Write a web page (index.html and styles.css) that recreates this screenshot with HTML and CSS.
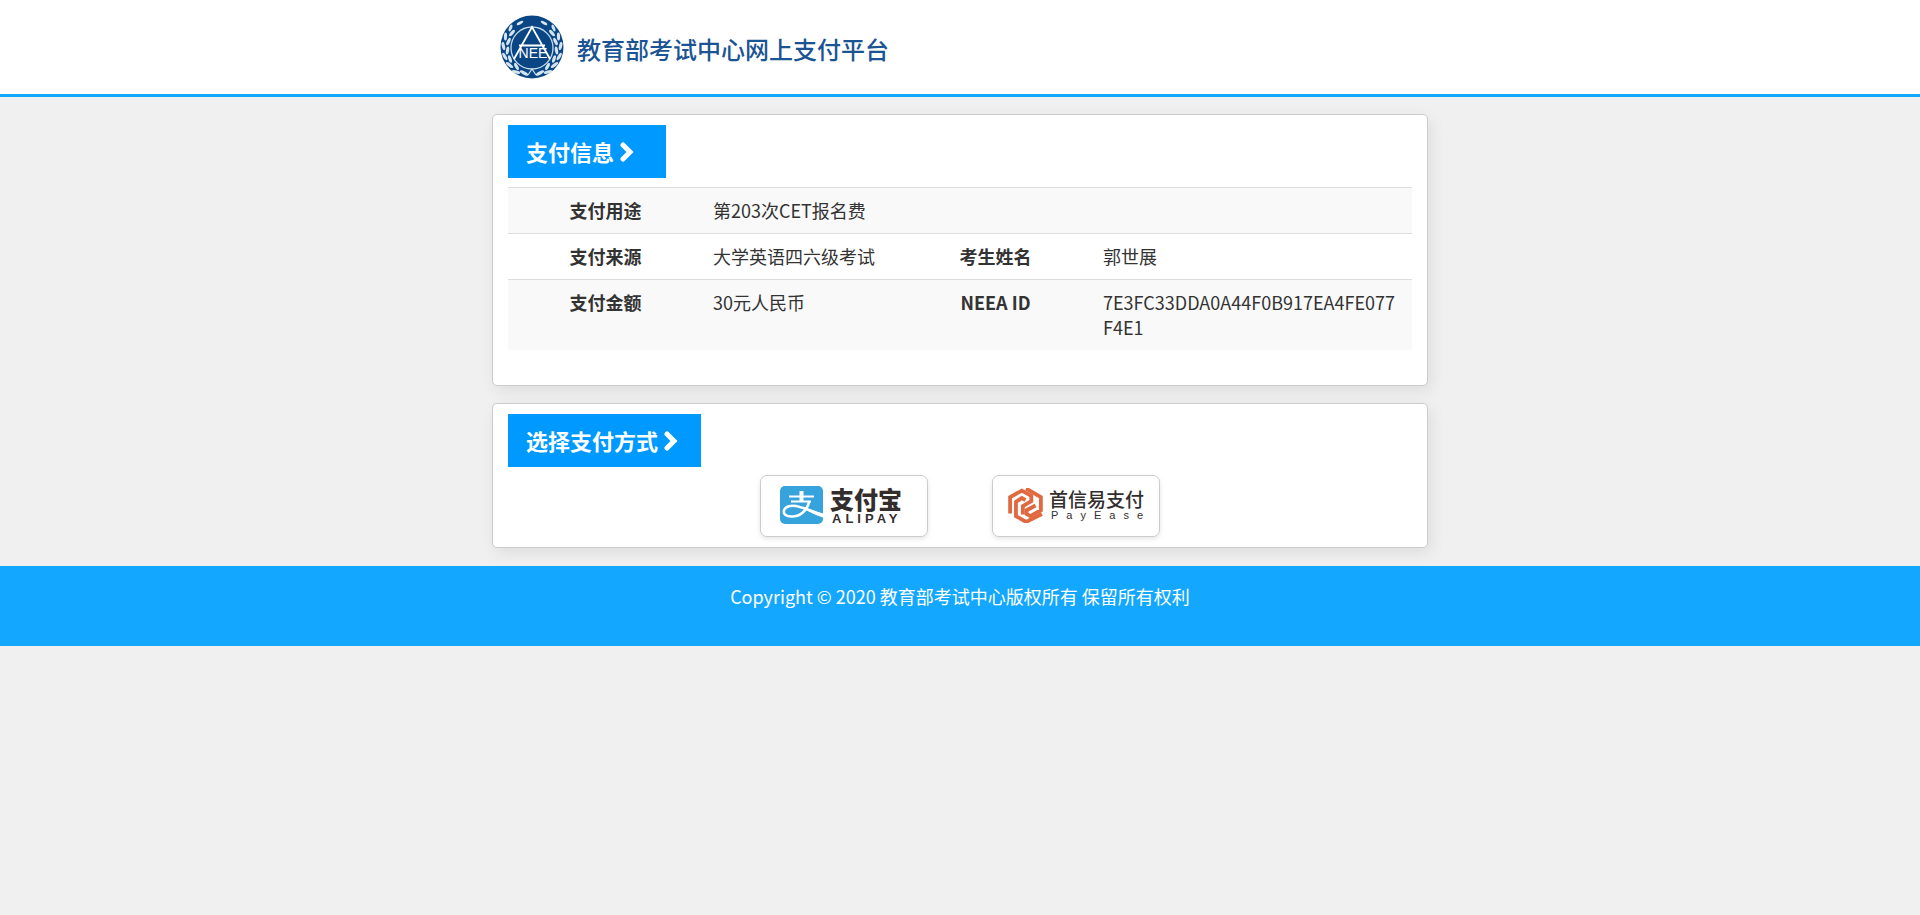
FILE: index.html
```html
<!DOCTYPE html>
<html lang="zh-CN">
<head>
<meta charset="utf-8">
<meta name="viewport" content="width=device-width, initial-scale=1">
<title>教育部考试中心网上支付平台</title>
<link rel="stylesheet" href="styles.css">
</head>
<body>
<header class="site-header">
  <div class="container brand">
    <svg class="emblem" viewBox="0 0 64 64" aria-hidden="true">
      <defs>
        <g id="branch" fill="#d5e4f1">
          <ellipse cx="24" cy="58" rx="4.6" ry="1.6" transform="rotate(28 24 58)"/>
          <ellipse cx="16" cy="57" rx="4.4" ry="1.6" transform="rotate(12 16 57)"/>
          <ellipse cx="16.500" cy="51.500" rx="1.600" ry="4" transform="rotate(-28 16.500 51.500)"/>
          <ellipse cx="9.500" cy="50" rx="4.400" ry="1.600" transform="rotate(38 9.500 50)"/>
          <ellipse cx="10" cy="44" rx="1.600" ry="4" transform="rotate(-18 10 44)"/>
          <ellipse cx="4.800" cy="41.500" rx="4.200" ry="1.600" transform="rotate(60 4.800 41.500)"/>
          <ellipse cx="7.500" cy="35.500" rx="1.600" ry="4" transform="rotate(10 7.500 35.500)"/>
          <ellipse cx="3.400" cy="31" rx="1.600" ry="4.200" transform="rotate(-12 3.400 31)"/>
          <ellipse cx="8.500" cy="26.500" rx="1.600" ry="4" transform="rotate(26 8.500 26.500)"/>
          <ellipse cx="5.500" cy="21.500" rx="1.600" ry="4" transform="rotate(2 5.500 21.500)"/>
          <ellipse cx="12" cy="18" rx="1.600" ry="4" transform="rotate(40 12 18)"/>
          <ellipse cx="10.500" cy="13" rx="1.500" ry="3.600" transform="rotate(22 10.500 13)"/>
          <ellipse cx="20" cy="8" rx="3.600" ry="1.400" transform="rotate(-28 20 8)"/>
        </g>
      </defs>
      <circle cx="32" cy="32" r="31.500" fill="#0a4684"/>
      <use href="#branch"/>
      <use href="#branch" transform="translate(64 0) scale(-1 1)"/>
      <circle cx="32" cy="33" r="21" fill="#0a4684" stroke="#c5d9ea" stroke-width="1.300"/>
      <path d="M14 44 L32 12 L50 44 M19 30.500 H45" fill="none" stroke="#fff" stroke-width="1.800"/>
      <path d="M28 60 L32 54 L36 60" fill="none" stroke="#d5e4f1" stroke-width="1.200"/>
      <text class="emblem-text" x="33" y="43" text-anchor="middle">NEE</text>
    </svg>
    <h1 class="brand-name">教育部考试中心网上支付平台</h1>
  </div>
</header>

<main class="container content">
  <section class="card card-info">
    <h2 class="tag">支付信息
      <svg class="chevron" viewBox="0 0 14 20" aria-hidden="true"><path d="M3 3 L10 10 L3 17"/></svg>
    </h2>
    <table class="info">
      <colgroup><col class="col-narrow"><col class="col-narrow"><col class="col-narrow"><col></colgroup>
      <tbody>
        <tr><th scope="row">支付用途</th><td colspan="3">第203次CET报名费</td></tr>
        <tr><th scope="row">支付来源</th><td>大学英语四六级考试</td><th scope="row">考生姓名</th><td>郭世展</td></tr>
        <tr><th scope="row">支付金额</th><td>30元人民币</td><th scope="row">NEEA ID</th><td>7E3FC33DDA0A44F0B917EA4FE077F4E1</td></tr>
      </tbody>
    </table>
  </section>

  <section class="card">
    <h2 class="tag">选择支付方式
      <svg class="chevron" viewBox="0 0 14 20" aria-hidden="true"><path d="M3 3 L10 10 L3 17"/></svg>
    </h2>
    <div class="methods">
      <button class="method" type="button">
        <svg class="alipay-icon" viewBox="0 0 43 38" aria-hidden="true">
          <rect width="43" height="38" rx="5" fill="#36a3dd"/>
          <path d="M9 10.500 H34 M11 15.500 H31" fill="none" stroke="#fff" stroke-width="2"/>
          <path d="M21.500 5 V16" fill="none" stroke="#fff" stroke-width="4"/>
          <path d="M29.500 15 C28 21 23 30 13 30.500 C6 31 3 28 4 24.500 C5 21 10 19 16 20 C24 21.500 33 26 43 29" fill="none" stroke="#fff" stroke-width="2.600"/>
          <path d="M24 21 C30 23.500 36 26 43 27.500 V31.500 C36 29.500 30 26 24 23 Z" fill="#fff"/>
        </svg>
        <span class="wordmark"><span class="alipay-cn">支付宝</span><span class="alipay-en">ALIPAY</span></span>
      </button>
      <button class="method" type="button">
        <svg class="payease-icon" viewBox="1 1 33 33" aria-hidden="true">
          <g fill="none" stroke="#e0693f" stroke-width="3.600">
            <path d="M3 25 V9.500 L14 3.500 L23 8.500 V13.500 L15 18 V26"/>
            <path d="M18 1.500 L32 9.500 V22 L22 27.500 L18.500 25.500 V22 L27 17.500"/>
            <path d="M33 25.500 L18 33 L8.500 27.500 V14 L14 10.500 L17.500 12.500"/>
          </g>
        </svg>
        <span class="wordmark"><span class="payease-cn">首信易支付</span><span class="payease-en">PayEase</span></span>
      </button>
    </div>
  </section>
</main>

<footer class="site-footer">Copyright © 2020 教育部考试中心版权所有 保留所有权利</footer>
</body>
</html>
```

FILE: styles.css
```css
* {
  box-sizing: border-box;
}

body {
  margin: 0;
  background: #f0f0f0;
  color: #333;
  font: 18px/25px "Noto Sans CJK SC", sans-serif;
}

.container {
  max-width: 936px;
  margin: 0 auto;
}

.site-header {
  background: #fff;
  border-bottom: 3px solid #13a7ff;
}

.brand {
  display: flex;
  align-items: center;
  gap: 13px;
  padding: 15px 8px;
}

.emblem {
  width: 64px;
  height: 64px;
}

.emblem-text {
  fill: #fff;
  font: 14px "Liberation Sans", sans-serif;
}

.brand-name {
  margin: 0;
  padding-top: 4px;
  color: #1b5493;
  font-size: 24px;
  font-weight: 500;
  line-height: 32px;
}

.content {
  display: flex;
  flex-direction: column;
  gap: 17px;
  padding: 17px 0 18px;
}

.card {
  padding: 10px 15px;
  background: #fff;
  border: 1px solid #ccc;
  border-radius: 5px;
  box-shadow: 3px 5px 15px rgba(0, 0, 0, 0.08);
}

.card-info {
  padding-bottom: 35px;
}

.tag {
  display: inline-flex;
  align-items: center;
  gap: 6px;
  min-width: 158px;
  margin: 0;
  padding: 14px 23px 14px 18px;
  background: #09f;
  color: #fff;
  font-size: 22px;
  font-weight: 700;
  line-height: 25px;
}

.chevron {
  width: 14px;
  height: 20px;
  fill: none;
  stroke: #fff;
  stroke-width: 5;
  stroke-linecap: round;
}

.info {
  width: 100%;
  margin-top: 9px;
  border-collapse: collapse;
  table-layout: fixed;
}

.col-narrow {
  width: 195px;
}

.info th,
.info td {
  padding: 10px;
  border-top: 1px solid #ddd;
  vertical-align: top;
  overflow-wrap: anywhere;
}

.info td {
  text-align: left;
}

.info th {
  font-weight: 700;
}

.info tr:nth-child(odd) {
  background: #f9f9f9;
}

.methods {
  display: flex;
  flex-wrap: wrap;
  justify-content: center;
  gap: 16px 64px;
  margin-top: 8px;
}

.method {
  display: flex;
  align-items: center;
  gap: 7px;
  width: 168px;
  height: 62px;
  padding: 0 0 2px 19px;
  background: #fff;
  border: 1px solid #ccc;
  border-radius: 7px;
  box-shadow: 0 2px 5px rgba(0, 0, 0, 0.1);
  color: #332e2d;
  font-family: "Noto Sans CJK SC", sans-serif;
  cursor: pointer;
}

.method + .method {
  gap: 6px;
  padding-left: 15px;
}

.wordmark {
  display: flex;
  flex-direction: column;
  gap: 1px;
  text-align: left;
}

.alipay-icon {
  width: 43px;
  height: 38px;
}

.alipay-cn {
  font-size: 24px;
  font-weight: 900;
  line-height: 25px;
}

.alipay-en {
  padding-left: 2px;
  font: 700 13px/13px "Liberation Sans", sans-serif;
  letter-spacing: 4px;
}

.payease-icon {
  width: 35px;
  height: 35px;
}

.payease-cn {
  font-size: 19px;
  font-weight: 500;
  line-height: 19px;
}

.payease-en {
  padding-left: 2px;
  font: 11px/12px "Liberation Sans", sans-serif;
  letter-spacing: 8px;
}

.site-footer {
  min-height: 80px;
  padding: 18px 16px;
  background: #13a7ff;
  color: #fff;
  text-align: center;
}
```
